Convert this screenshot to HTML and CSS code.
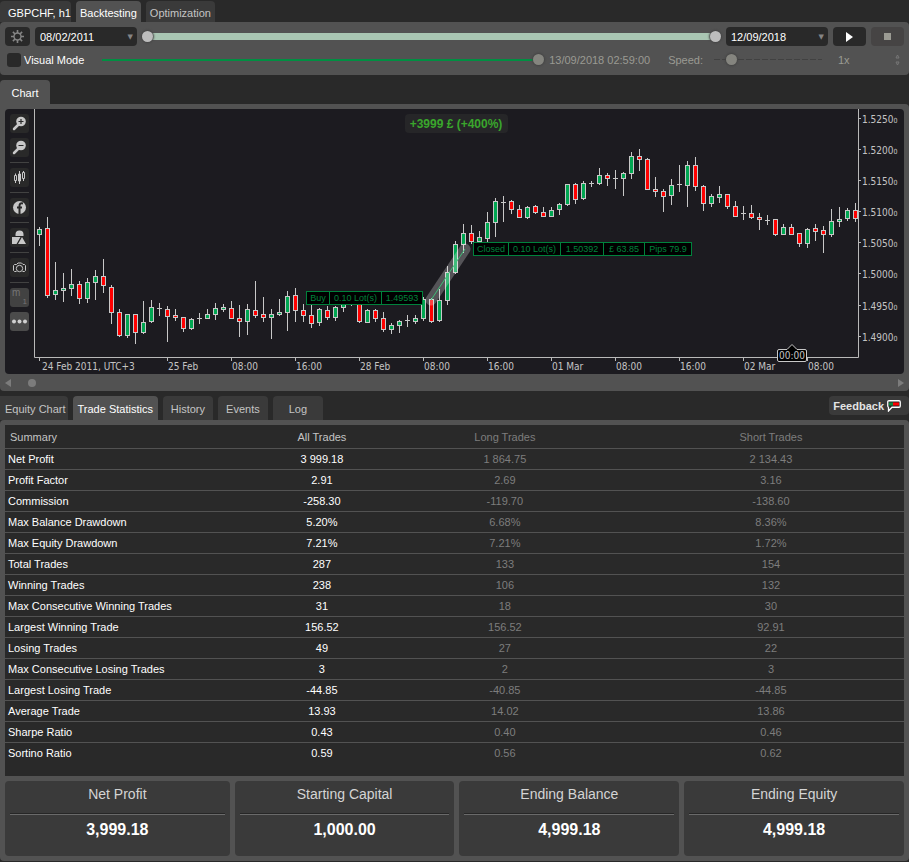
FILE: index.html
```html
<!DOCTYPE html>
<html lang="en">
<head>
    <meta charset="UTF-8">
    <meta name="viewport" content="width=device-width, initial-scale=1.0">
    <title>GBPCHF, h1 - Backtesting</title>
    <link rel="stylesheet" href="styles.css">
</head>
<body>
    <nav class="tabs top-tabs">
        <button class="tab bright">GBPCHF, h1</button>
        <button class="tab active">Backtesting</button>
        <button class="tab">Optimization</button>
    </nav>

    <section class="panel controls">
        <div class="control-row">
            <button class="dark-button gear" aria-label="Settings">
                <svg width="13" height="13" viewBox="0 0 13 13" fill="none" stroke="#858585">
                    <circle cx="6.5" cy="6.5" r="3.5" stroke-width="1.4"/>
                    <path d="M6.5 0v3M6.5 10v3M0 6.5h3M10 6.5h3M1.9 1.9l2.1 2.1M9 9l2.1 2.1M11.1 1.9L9 4M4 9l-2.1 2.1" stroke-width="1.6"/>
                </svg>
            </button>
            <div class="date">
                <select aria-label="Start date"><option>08/02/2011</option></select>
                <span class="arrow">▼</span>
            </div>
            <div class="range">
                <input type="range" min="0" max="100" value="0" aria-label="Range start">
                <input type="range" min="0" max="100" value="100" aria-label="Range end">
            </div>
            <div class="date">
                <select aria-label="End date"><option>12/09/2018</option></select>
                <span class="arrow">▼</span>
            </div>
            <button class="dark-button play" aria-label="Play">
                <svg width="9" height="10" viewBox="0 0 9 10"><path d="M1 0l7 5-7 5z" fill="#fff"/></svg>
            </button>
            <button class="dark-button stop" aria-label="Stop" disabled>
                <svg width="7" height="7"><rect width="7" height="7" fill="#9b9b93"/></svg>
            </button>
        </div>
        <div class="control-row second">
            <label class="visual"><input type="checkbox">Visual Mode</label>
            <input class="progress" type="range" min="0" max="100" value="100" aria-label="Progress">
            <span class="dim time">13/09/2018 02:59:00</span>
            <label class="dim" for="speed">Speed:</label>
            <input class="speed" id="speed" type="range" min="0" max="100" value="12">
            <input class="dim factor" type="text" value="1x" aria-label="Speed factor">
            <button class="spin" aria-label="Change speed">
                <svg width="5" height="12" viewBox="0 0 5 12" fill="none" stroke="#777"><path d="M1 4l1.500-3L4 4zM1 8l1.500 3L4 8z"/></svg>
            </button>
        </div>
    </section>

    <nav class="tabs chart-tabs">
        <button class="tab active">Chart</button>
    </nav>

    <section class="panel chart-panel">
        <div class="chart-box">
            <div class="toolbar">
                <button aria-label="Zoom in">
                    <svg viewBox="0 0 19 19"><path d="M8 11l-4 4" stroke="#c8c8c8" stroke-width="2.500" stroke-linecap="round"/><circle cx="11" cy="7.500" r="4.800" fill="#c8c8c8"/><path d="M8.500 7.500h5M11 5v5" stroke="#292929" stroke-width="1.200"/></svg>
                </button>
                <button aria-label="Zoom out">
                    <svg viewBox="0 0 19 19"><path d="M8 11l-4 4" stroke="#c8c8c8" stroke-width="2.500" stroke-linecap="round"/><circle cx="11" cy="7.500" r="4.800" fill="#c8c8c8"/><path d="M8.500 7.500h5" stroke="#292929" stroke-width="1.200"/></svg>
                </button>
                <hr>
                <button aria-label="Chart type">
                    <svg viewBox="0 0 19 19" fill="none" stroke="#c8c8c8"><path d="M5.500 5.500v2M5.500 13v2M9.500 3v13M13.500 3v1M13.500 11v2"/><path d="M4.500 7.500h2v5h-2zM12.500 4.500h2v6h-2z"/><path d="M8.500 6h2v7h-2z" fill="#c8c8c8"/></svg>
                </button>
                <hr>
                <button aria-label="Indicators">
                    <svg viewBox="0 0 19 19"><circle cx="9.500" cy="9.500" r="6.500" fill="#c8c8c8"/><path d="M13 5.500q-3.500-1-3.500 2.500v8M7 9.500h5" stroke="#292929" stroke-width="2" fill="none"/></svg>
                </button>
                <hr>
                <button aria-label="Objects">
                    <svg viewBox="0 0 19 19" fill="#c8c8c8"><path d="M5.500 8V6.500a4 4 0 0 1 8 0V8z"/><path d="M2 9h8.500L6.500 16H2zM12 9l4 7H8z"/></svg>
                </button>
                <hr>
                <button aria-label="Snapshot">
                    <svg viewBox="0 0 19 19" fill="none" stroke="#c8c8c8"><path d="M6.500 13.500h-2L3.500 12.500v-5l1-1h2L8 5h3.500L13 6.500h1.500l1 1v5l-1 1h-2"/><circle cx="9.500" cy="10.500" r="3.200"/></svg>
                </button>
                <hr>
                <button class="period" aria-label="Period"><span>m</span><sub>1</sub></button>
                <button class="more" aria-label="More">
                    <svg viewBox="0 0 19 19" fill="#d0d0d0"><circle cx="4" cy="9.500" r="2"/><circle cx="9.500" cy="9.500" r="2"/><circle cx="15" cy="9.500" r="2"/></svg>
                </button>
            </div>
            <svg class="chart" id="chart" viewBox="34 109 870 265" role="img" aria-label="GBPCHF hourly chart"></svg>
        </div>
        <div class="scrollbar">
            <svg width="6" height="8"><path d="M6 0v8L0 4z" fill="#7c7c7c"/></svg>
            <span class="scroll-thumb"></span>
            <svg width="6" height="8"><path d="M0 0v8l6-4z" fill="#7c7c7c"/></svg>
        </div>
    </section>

    <div class="lower-bar">
        <nav class="tabs lower-tabs">
            <button class="tab equity">Equity Chart</button>
            <button class="tab active">Trade Statistics</button>
            <button class="tab">History</button>
            <button class="tab">Events</button>
            <button class="tab">Log</button>
        </nav>
        <button class="feedback">Feedback
            <svg width="14" height="12" viewBox="0 0 14 12"><path d="M2 .750h10q1.250 0 1.250 1.250v4q0 1.250-1.250 1.250H5L1.500 11V7.250Q.750 7 .750 6V2Q.750.750 2 .750z" fill="#292929" stroke="#fff" stroke-width="1.300"/><path d="M2 2.500h4v3H2z" fill="#0a8a3c"/><path d="M6 2.500h6v3H6z" fill="#f00"/></svg>
        </button>
    </div>

    <section class="panel stats">
        <div class="table-box">
            <table>
                <colgroup><col><col class="col-all"><col class="col-side"><col class="col-side"></colgroup>
                <thead>
                    <tr><th>Summary</th><th>All Trades</th><th>Long Trades</th><th>Short Trades</th></tr>
                </thead>
                <tbody>
                    <tr><td>Net Profit</td><td>3 999.18</td><td>1 864.75</td><td>2 134.43</td></tr>
                    <tr><td>Profit Factor</td><td>2.91</td><td>2.69</td><td>3.16</td></tr>
                    <tr><td>Commission</td><td>-258.30</td><td>-119.70</td><td>-138.60</td></tr>
                    <tr><td>Max Balance Drawdown</td><td>5.20%</td><td>6.68%</td><td>8.36%</td></tr>
                    <tr><td>Max Equity Drawdown</td><td>7.21%</td><td>7.21%</td><td>1.72%</td></tr>
                    <tr><td>Total Trades</td><td>287</td><td>133</td><td>154</td></tr>
                    <tr><td>Winning Trades</td><td>238</td><td>106</td><td>132</td></tr>
                    <tr><td>Max Consecutive Winning Trades</td><td>31</td><td>18</td><td>30</td></tr>
                    <tr><td>Largest Winning Trade</td><td>156.52</td><td>156.52</td><td>92.91</td></tr>
                    <tr><td>Losing Trades</td><td>49</td><td>27</td><td>22</td></tr>
                    <tr><td>Max Consecutive Losing Trades</td><td>3</td><td>2</td><td>3</td></tr>
                    <tr><td>Largest Losing Trade</td><td>-44.85</td><td>-40.85</td><td>-44.85</td></tr>
                    <tr><td>Average Trade</td><td>13.93</td><td>14.02</td><td>13.86</td></tr>
                    <tr><td>Sharpe Ratio</td><td>0.43</td><td>0.40</td><td>0.46</td></tr>
                    <tr><td>Sortino Ratio</td><td>0.59</td><td>0.56</td><td>0.62</td></tr>
                </tbody>
            </table>
        </div>
        <div class="cards">
            <div class="card"><h2>Net Profit</h2><p>3,999.18</p></div>
            <div class="card"><h2>Starting Capital</h2><p>1,000.00</p></div>
            <div class="card"><h2>Ending Balance</h2><p>4,999.18</p></div>
            <div class="card"><h2>Ending Equity</h2><p>4,999.18</p></div>
        </div>
    </section>

    <script src="chart.js"></script>
</body>
</html>
```
FILE: styles.css
```css
* {
    box-sizing: border-box;
}
body {
    margin: 0;
    padding-top: 1px;
    background-color: #292929;
    color: #fff;
    font-family: "Liberation Sans", Arial, sans-serif;
    font-size: 11px;
}
button, input, select {
    font: inherit;
    color: inherit;
    margin: 0;
    padding: 0;
    border: none;
}
svg {
    display: block;
}

/* tabs */
.tabs {
    display: flex;
    gap: 5px;
}
.tab {
    height: 24px;
    padding: 2px 5px 0;
    min-width: 50px;
    background-color: #3a3a3a;
    color: #c4c4c4;
    border-radius: 4px 4px 0 0;
}
.tab.active {
    background-color: #525252;
    color: #fff;
}
.top-tabs .tab {
    height: 21px;
    padding: 3px 4px 0;
}
.top-tabs .bright {
    color: #fff;
    padding: 3px 0 0 8px;
}
.chart-tabs {
    margin-top: 5px;
}
.panel {
    background-color: #525252;
    border-radius: 4px;
    padding: 5px;
}

/* control rows */
.controls {
    height: 53px;
}
.control-row {
    display: flex;
    align-items: center;
    gap: 5px;
    height: 19px;
}
.dark-button {
    display: flex;
    justify-content: center;
    align-items: center;
    width: 33px;
    height: 19px;
    background-color: #292929;
    border-radius: 4px;
}
.gear {
    width: 25px;
}
.stop {
    background-color: #464444;
}
.date {
    position: relative;
    width: 102px;
    height: 19px;
}
.date select {
    appearance: none;
    width: 100%;
    height: 100%;
    padding: 0 5px;
    background-color: #292929;
    border-radius: 4px;
}
.date .arrow {
    position: absolute;
    right: 4px;
    top: 5px;
    font-family: "DejaVu Sans", sans-serif;
    font-size: 7px;
    line-height: 10px;
    color: #858585;
    pointer-events: none;
}
input[type="range"] {
    appearance: none;
    height: 14px;
    background: none;
}
input[type="range"]::-webkit-slider-thumb {
    appearance: none;
    width: 11px;
    height: 11px;
    border-radius: 50%;
    background-color: #85857f;
    box-shadow: 0 0 2px 1px #444;
}
.range {
    flex: 1;
    display: grid;
    align-items: center;
    background: linear-gradient(#a9c6b3, #a9c6b3) center / calc(100% - 12px) 7px no-repeat;
}
.range input {
    grid-area: 1 / 1;
    width: 100%;
    pointer-events: none;
}
.range input::-webkit-slider-thumb {
    pointer-events: auto;
    background-color: #bdbdbd;
}
.second {
    margin-top: 4px;
    gap: 0;
}
.dim {
    color: #9a9a92;
}
.visual {
    display: flex;
    align-items: center;
    gap: 3px;
    padding-left: 2px;
}
.visual input {
    appearance: none;
    width: 14px;
    height: 14px;
    background-color: #292929;
    border-radius: 3px;
}
.progress {
    flex: 1;
    margin-left: 18px;
}
.progress::-webkit-slider-runnable-track {
    background: linear-gradient(#008f42, #008f42) 0 5px / 100% 2px no-repeat;
}
.time {
    margin: 0 18px 0 5px;
}
.speed {
    width: 108px;
    margin-left: 11px;
}
.speed::-webkit-slider-runnable-track {
    background: repeating-linear-gradient(90deg, #414141 0 6px, #525252 6px 8px) 0 5px / 100% 1px no-repeat;
}
.factor {
    width: 40px;
    margin-left: 16px;
    background: none;
}
.spin {
    background: none;
    margin: 0 4px 0 17px;
}

/* chart */
.chart-panel {
    padding-bottom: 0;
    border-top-left-radius: 0;
}
.chart-box {
    display: flex;
    background-color: #1c1b20;
    border-radius: 4px;
    overflow: hidden;
}
.toolbar {
    width: 29px;
    flex: none;
    padding: 5px;
    display: flex;
    flex-direction: column;
    gap: 5px;
}
.toolbar button {
    width: 19px;
    height: 19px;
    background-color: #292929;
    border-radius: 3px;
}
.toolbar hr {
    width: 19px;
    height: 1px;
    margin: 0;
    border: none;
    background-color: #424242;
}
.toolbar .period {
    display: flex;
    justify-content: space-between;
    padding: 0 2px;
    background-color: #424242;
    color: #757575;
    font-size: 10px;
    line-height: 10px;
}
.period sub {
    font-size: 8px;
    align-self: flex-end;
    line-height: 10px;
}
.toolbar .more {
    background-color: #4b4b4b;
}
.chart {
    flex: 1;
    min-width: 0;
}
.chart text {
    font-family: "DejaVu Sans Condensed", "DejaVu Sans", sans-serif;
    font-size: 10px;
    fill: #c4c4c4;
}
.chart .axis {
    fill: none;
    stroke: #b9b9b9;
}
.chart .wick, .chart .candle {
    stroke: #c8c8c8;
}
.chart .up {
    fill: #00a651;
}
.chart .down {
    fill: #f00;
}
.chart .small {
    font-size: 7px;
}
.chart .tag {
    fill: #000;
    stroke: #00823c;
}
.chart .tag-text {
    font-family: "Liberation Sans", Arial, sans-serif;
    font-size: 9px;
    fill: #00823c;
    text-anchor: middle;
}
.chart .trade-glow {
    stroke: #fff;
    stroke-opacity: 0.25;
    stroke-width: 11;
    stroke-linecap: round;
}
.chart .trade-line {
    stroke: #3fbf78;
}
.chart .badge {
    fill: #262628;
}
.chart .profit {
    font-family: "Liberation Sans", Arial, sans-serif;
    font-size: 12px;
    font-weight: bold;
    fill: #3aa62c;
    text-anchor: middle;
}
.chart .marker {
    fill: #000;
    stroke: #c8c8c8;
}
.chart .marker-text {
    text-anchor: middle;
}
.scrollbar {
    display: flex;
    align-items: center;
    gap: 17px;
    height: 17px;
}
.scroll-thumb {
    width: 8px;
    height: 8px;
    border-radius: 50%;
    background-color: #7c7c7c;
    margin-right: auto;
}

/* lower tabs */
.lower-bar {
    display: flex;
    justify-content: space-between;
    align-items: flex-start;
    margin-top: 5px;
}
.lower-tabs .equity {
    padding-right: 2px;
    border-top-left-radius: 0;
}
.feedback {
    display: flex;
    align-items: center;
    gap: 3px;
    height: 19px;
    padding: 0 8px 0 4px;
    background-color: #3a3a3a;
    border-radius: 4px;
    font-weight: bold;
    color: #e4e4e4;
}

/* statistics */
.table-box {
    background-color: #292929;
    padding-bottom: 12px;
}
table {
    width: 100%;
    table-layout: fixed;
    border-collapse: separate;
    border-spacing: 0;
}
.col-all {
    width: 11.1%;
}
.col-side {
    width: 29.6%;
}
th, td {
    height: 21px;
    padding: 0;
    font-weight: normal;
    text-align: center;
    line-height: 13px;
    border-bottom: 1px solid #525252;
}
th {
    height: 24px;
    padding-top: 2px;
    color: #c4c4c4;
}
th:first-child, td:first-child {
    text-align: left;
    padding-left: 3px;
}
th:first-child {
    padding-left: 5px;
}
th:nth-child(n+3), td:nth-child(n+3) {
    color: #7d7d7d;
}
tbody tr:last-child td {
    border-bottom: none;
}
.cards {
    display: grid;
    grid-template-columns: 225fr 220fr 220fr 220fr;
    gap: 5px;
    margin-top: 5px;
}
.card {
    height: 75px;
    padding: 0 5px;
    background-color: #3a3a3a;
    border-radius: 4px;
    text-align: center;
}
.card h2 {
    height: 33px;
    margin: 0;
    padding-top: 5px;
    font-size: 14px;
    font-weight: normal;
    line-height: 16px;
    color: #d4d4d4;
    border-bottom: 1px solid #262626;
    box-shadow: 0 1px 0 #6a6a6a;
}
.card p {
    margin: 0;
    padding-top: 7px;
    font-size: 16px;
    font-weight: bold;
    line-height: 18px;
}
```
FILE: chart.js
```js
// high, body top, body bottom, low, direction (u = up, d = down, x = unchanged)
const candles = [
    [227,229,235,246,'u'], [217,228,296,298,'d'], [262,290,295,300,'u'], [273,288,291,302,'u'],
    [269,284,289,296,'u'], [281,284,299,304,'d'], [278,282,299,303,'u'], [270,276,283,300,'u'],
    [259,276,286,293,'d'], [285,287,313,324,'d'], [309,312,336,337,'d'], [314,314,336,338,'u'],
    [314,314,333,344,'d'], [301,322,333,334,'u'], [300,307,322,323,'u'], [303,308,309,316,'x'],
    [306,309,317,342,'d'], [309,315,318,321,'d'], [317,317,329,332,'d'], [318,319,329,330,'u'],
    [313,318,319,324,'x'], [309,314,319,319,'u'], [303,308,315,320,'u'], [304,307,310,312,'u'],
    [301,308,319,319,'d'], [305,318,322,337,'d'], [304,309,322,335,'u'], [281,310,316,318,'d'],
    [297,314,318,322,'d'], [309,314,318,339,'u'], [299,312,315,316,'u'], [291,296,313,331,'u'],
    [288,295,311,322,'d'], [304,310,316,322,'d'], [305,315,324,328,'d'], [308,309,323,326,'u'],
    [306,310,318,320,'d'], [306,307,318,321,'u'], [300,302,308,312,'u'], [298,299,304,306,'u'],
    [304,304,322,323,'d'], [309,310,323,323,'u'], [309,310,319,322,'d'], [312,318,330,332,'d'],
    [323,325,330,334,'u'], [320,321,326,333,'u'], [315,320,321,327,'x'], [315,318,322,324,'u'],
    [297,299,319,321,'u'], [298,299,322,323,'d'], [289,300,321,322,'u'], [266,272,301,305,'u'],
    [241,244,273,274,'u'], [224,233,245,253,'u'], [225,233,242,244,'d'], [231,237,242,242,'u'],
    [212,222,239,242,'u'], [198,201,223,237,'u'], [196,202,203,222,'x'], [200,201,210,214,'d'],
    [205,209,218,218,'d'], [206,207,218,219,'u'], [205,206,213,214,'d'], [207,212,217,217,'d'],
    [207,210,217,217,'u'], [203,204,210,215,'u'], [184,184,205,206,'u'], [183,184,200,204,'d'],
    [181,183,199,200,'u'], [181,183,184,187,'x'], [168,175,184,185,'u'], [173,175,179,186,'d'],
    [170,178,179,189,'x'], [172,173,179,196,'u'], [152,156,174,179,'u'], [149,156,160,171,'d'],
    [158,159,190,190,'d'], [177,189,192,197,'d'], [189,191,197,212,'d'], [179,185,196,205,'u'],
    [165,184,185,192,'x'], [161,165,186,207,'u'], [157,165,187,191,'d'], [185,186,204,211,'d'],
    [194,196,204,207,'u'], [186,194,198,203,'u'], [194,194,207,209,'d'], [201,206,217,217,'d'],
    [206,213,214,220,'x'], [205,213,218,219,'d'], [213,217,220,230,'d'], [215,220,221,225,'x'],
    [219,219,235,236,'d'], [224,227,235,235,'u'], [224,227,235,235,'d'], [233,233,244,247,'d'],
    [228,229,244,248,'u'], [224,228,232,241,'d'], [226,230,235,253,'d'], [209,221,235,237,'u'],
    [207,219,222,227,'u'], [208,210,219,221,'u'], [203,210,219,222,'d']
];
const times = [[39, '24 Feb 2011, UTC+3'], [167, '25 Feb'], [231, '08:00'], [295, '16:00'], [359, '28 Feb'],
    [423, '08:00'], [487, '16:00'], [551, '01 Mar'], [615, '08:00'], [679, '16:00'], [743, '02 Mar'], [807, '08:00']];
const prices = [[118, '1.5250'], [149, '1.5200'], [180, '1.5150'], [211, '1.5100'],
    [242, '1.5050'], [273, '1.5000'], [305, '1.4950'], [336, '1.4900']];

function drawCandle(c, i) {
    const [high, top, bottom, low, dir] = c;
    const x = 39 + i * 8;
    let out = `<path class="wick" d="M${x + 0.5} ${high}V${low}"/>`;
    if (dir === 'x') {
        out += `<path class="wick" d="M${x - 2} ${top + 0.5}h5"/>`;
    } else {
        out += `<rect class="candle ${dir === 'u' ? 'up' : 'down'}" x="${x - 1.5}" y="${top + 0.5}" width="4" height="${bottom - top - 1}"/>`;
    }
    return out;
}

// edges has one more entry than labels
function drawTag(edges, y, labels) {
    return labels.map((label, i) => {
        const width = edges[i + 1] - edges[i];
        return `<rect class="tag" x="${edges[i] + 0.5}" y="${y + 0.5}" width="${width}" height="13"/>` +
            `<text class="tag-text" x="${edges[i] + width / 2 + 0.5}" y="${y + 10}">${label}</text>`;
    }).join('');
}

let svg = '<path class="axis" d="M34.5 109V357.5H858.5V109"/>';
times.forEach(([x, label]) => {
    svg += `<path class="axis" d="M${x + 0.5} 358v3"/><text x="${x === 39 ? 42 : x + 1}" y="370">${label}</text>`;
});
prices.forEach(([y, label]) => {
    svg += `<path class="axis" d="M859 ${y + 0.5}h2"/><text x="862" y="${y + 5}">${label}<tspan class="small">0</tspan></text>`;
});
svg += candles.map(drawCandle).join('');
svg += '<path class="trade-glow" d="M431 300L465 249"/><path class="trade-line" d="M431 300L465 249"/>';
svg += drawTag([306, 329, 381, 422], 291, ['Buy', '0.10 Lot(s)', '1.49593']);
svg += drawTag([473, 508, 560, 603, 644, 691], 242, ['Closed', '0.10 Lot(s)', '1.50392', '£ 63.85', 'Pips 79.9']);
svg += '<rect class="badge" x="405" y="114" width="103" height="19" rx="4"/><text class="profit" x="456" y="128">+3999 £ (+400%)</text>';
svg += '<path class="marker" d="M779 349.5h8l5-5 5 5h8q1.500 0 1.500 1.500v9q0 1.500-1.500 1.500h-26q-1.500 0-1.500-1.500v-9q0-1.500 1.500-1.500z"/><text class="marker-text" x="792" y="359">00:00</text>';
document.getElementById('chart').innerHTML = svg;
```
